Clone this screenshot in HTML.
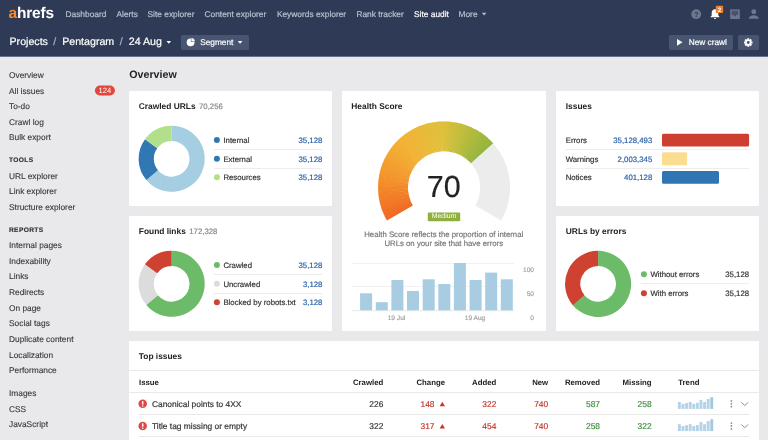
<!DOCTYPE html>
<html><head><meta charset="utf-8"><title>Site audit</title>
<style>
*{box-sizing:border-box;margin:0;padding:0}
body{will-change:transform;-webkit-text-stroke:.18px currentColor}html,body{text-rendering:geometricPrecision;width:768px;height:440px;overflow:hidden;background:#e9e9eb;font-family:"Liberation Sans",Arial,sans-serif;font-size:8.3px;color:#333}
.abs{position:absolute}
#hdr{position:absolute;left:0;top:0;width:768px;height:57px;background:linear-gradient(#2f3b56 56px,#66708a 56px)}
.nav{position:absolute;top:8.700px;font-size:8.370px;color:#b9c0cf;white-space:nowrap;line-height:10px}
.nav.on{color:#fff}
.logo{-webkit-text-stroke:0;position:absolute;left:8.5px;top:3.5px;font-size:15.5px;font-weight:bold;color:#fff;letter-spacing:-0.2px;line-height:20px}
.logo em{font-style:normal;color:#f6892a}
.bc{position:absolute;top:35px;left:9.500px;font-size:10.650px;color:#fff;white-space:nowrap;line-height:14px}
.bc.sl{color:#aab2c3}
.btn{position:absolute;top:34.6px;height:15px;background:#485571;border-radius:1.5px;color:#fff;font-size:8.3px;line-height:15px;white-space:nowrap}
.si{-webkit-text-stroke:.12px currentColor;position:absolute;left:9px;font-size:8.350px;line-height:12px;color:#393939;white-space:nowrap}
.sh{-webkit-text-stroke:.12px currentColor;position:absolute;left:9px;font-size:6.600px;font-weight:bold;letter-spacing:.36px;line-height:12px;color:#2c2c2c}
.badge{-webkit-text-stroke:0;position:absolute;left:95px;top:85.600px;width:19.900px;height:9.900px;color:#fff;font-size:7.600px;line-height:10.300px;text-align:center}
.card{position:absolute;background:#fff;border-radius:1px}
.ct{-webkit-text-stroke:0;position:absolute;left:9.800px;top:9.300px;font-size:8.400px;font-weight:bold;color:#222;line-height:12px;white-space:nowrap}
.ct span{-webkit-text-stroke:.18px currentColor;font-weight:normal;color:#888;font-size:7.800px;margin-left:1.100px}
h1{-webkit-text-stroke:0;position:absolute;left:129.200px;top:68.300px;font-size:10.700px;line-height:15px;font-weight:bold;color:#222}
.lr{position:absolute;height:12px;line-height:12px;white-space:nowrap;font-size:7.800px}
.dv{position:absolute;height:1px;background:#ededed}
.lr i{position:absolute;left:0px;top:3px;width:6px;height:6px;border-radius:3px}
.lr span{position:absolute;left:9.400px;top:.6px}
.lr b{position:absolute;right:0;top:.6px;font-weight:normal;color:#2c62a8}
.lr b.k{color:#333}
.ir{position:absolute;left:565.700px;width:183.400px;height:12px;line-height:12px;font-size:7.800px;white-space:nowrap}
.ir b{position:absolute;right:96.800px;font-weight:normal;color:#2c62a8}
.ir u{position:absolute;left:96.300px;top:-1.450px;height:12.700px;border-radius:1.500px}
.desc{position:absolute;left:341.500px;width:204.500px;top:229.500px;text-align:center;color:#777;font-size:7.800px;line-height:9.900px}
.th{-webkit-text-stroke:0;position:absolute;top:376.800px;font-weight:bold;font-size:7.800px;line-height:12px;color:#222;white-space:nowrap}
.td{position:absolute;font-size:8.400px;line-height:12px;white-space:nowrap}
.r{text-align:right}
.red{color:#c8372b}.grn{color:#3f8f3f}
.hl{position:absolute;left:129px;width:630px;height:1px;background:#e9e9e9}
</style></head><body>
<div id="hdr">
<div class="logo"><em>a</em>hrefs</div>
<div class="nav" style="left:65.5px">Dashboard</div>
<div class="nav" style="left:116.5px">Alerts</div>
<div class="nav" style="left:147.5px">Site explorer</div>
<div class="nav" style="left:204.5px">Content explorer</div>
<div class="nav" style="left:276.900px">Keywords explorer</div>
<div class="nav" style="left:356.400px">Rank tracker</div>
<div class="nav on" style="left:414px">Site audit</div>
<div class="nav" style="left:458.5px">More</div>
<div class="bc">Projects</div><div class="bc" style="left:62.2px">Pentagram</div><div class="bc" style="left:128.8px">24 Aug</div><div class="bc sl" style="left:53.2px">/</div><div class="bc sl" style="left:119.800px">/</div>
<div class="btn" style="left:181px;width:68px"><span style="position:absolute;left:19.2px">Segment</span></div>
<div class="btn" style="left:669.2px;width:64.1px"><span style="position:absolute;left:19.5px">New crawl</span></div>
<div class="btn" style="left:738.3px;width:20.5px"><svg width="20.5" height="15" viewBox="0 0 20.5 15" style="position:absolute;left:0;top:0"><g transform="translate(10.25 7.5)" fill="#fff"><g id="tt"><rect x="-1" y="-4.300" width="2" height="8.600" rx=".3"/><rect x="-4.300" y="-1" width="8.600" height="2" rx=".3"/></g><use href="#tt" transform="rotate(45)"/><circle r="3.100"/><circle r="1.450" fill="#485571"/></g></svg></div>
<svg class="abs" style="left:0;top:0" width="768" height="57" viewBox="0 0 768 57">
<circle cx="696.2" cy="14.2" r="4.9" fill="#6d778d"/>
<text x="696.2" y="17" font-size="7.5" font-weight="bold" fill="#2f3b56" text-anchor="middle" font-family="Liberation Sans">?</text>
<path d="M715 9.2c-2 0-3.3 1.5-3.3 3.6v2.6l-1.1 1.3v.6h8.8v-.6l-1.100-1.300v-2.600c0-2.100-1.300-3.600-3.300-3.600zM713.900 18h2.200a1.100 1.100 0 0 1-2.200 0z" fill="#fff"/>
<rect x="715.800" y="5.800" width="7.300" height="7.200" rx=".8" fill="#ec8230"/>
<text x="719.45" y="11.7" font-size="6.3" font-weight="bold" fill="#fff" text-anchor="middle" font-family="Liberation Sans">2</text>
<rect x="730.300" y="9.500" width="9.400" height="9.400" fill="#48526b"/><path d="M730.300 9.500h9.400v9.400h-9.400zM731.600 10.800v4.300h1.800l.7 1.100h1.600l.7-1.100h1.800v-4.300z" fill="#6d778d" fill-rule="evenodd"/>
<circle cx="753.800" cy="11.800" r="2.450" fill="#6d778d"/><path d="M748.900 18.800c0-2.300 2-3.500 4.900-3.500s4.900 1.200 4.900 3.500z" fill="#6d778d"/>
<path d="M166.500 40.900h4.600l-2.300 2.800z" fill="#fff"/><path d="M481.900 12.800h4.400l-2.200 2.700z" fill="#b9c0cf"/>
<circle cx="190.600" cy="42.300" r="3.900" fill="#fff"/><path d="M190.900 42V37.500a4.500 4.500 0 0 1 4.500 4.500z" fill="#485571"/><path d="M191.400 41.500V38.100a3.500 3.500 0 0 1 3.400 3.400z" fill="#fff"/>
<path d="M237.800 41h4.600l-2.300 2.700z" fill="#fff"/>
<path d="M677 38.900l5.500 3.400-5.500 3.400z" fill="#fff"/>
</svg>
</div>
<div class="si" style="top:69px">Overview</div><div class="si" style="top:84.6px">All issues</div><div class="si" style="top:99.7px">To-do</div><div class="si" style="top:115.6px">Crawl log</div><div class="si" style="top:130.8px">Bulk export</div><div class="si" style="top:169.5px">URL explorer</div><div class="si" style="top:185px">Link explorer</div><div class="si" style="top:200.8px">Structure explorer</div><div class="si" style="top:239px">Internal pages</div><div class="si" style="top:254.8px">Indexability</div><div class="si" style="top:270.3px">Links</div><div class="si" style="top:286px">Redirects</div><div class="si" style="top:301.5px">On page</div><div class="si" style="top:317.2px">Social tags</div><div class="si" style="top:332.8px">Duplicate content</div><div class="si" style="top:348.5px">Localization</div><div class="si" style="top:364px">Performance</div><div class="si" style="top:387px">Images</div><div class="si" style="top:402.5px">CSS</div><div class="si" style="top:418px">JavaScript</div><div class="sh" style="top:155.300px">TOOLS</div><div class="sh" style="top:224.800px">REPORTS</div>
<h1>Overview</h1>

<div class="card" style="left:129px;top:91px;width:203px;height:115px"><div class="ct">Crawled URLs <span>70,256</span></div></div>
<div class="card" style="left:129px;top:216px;width:203px;height:115px"><div class="ct">Found links <span>172,328</span></div></div>
<div class="card" style="left:342px;top:91px;width:204px;height:240px"><div class="ct" style="left:9.300px">Health Score</div></div>
<div class="card" style="left:556px;top:91px;width:203px;height:115px"><div class="ct">Issues</div></div>
<div class="card" style="left:556px;top:216px;width:203px;height:115px"><div class="ct">URLs by errors</div></div>
<div class="card" style="left:129px;top:341px;width:630px;height:110px"><div class="ct" style="top:8.7px">Top issues</div></div>

<svg class="abs" style="left:0;top:0" width="768" height="440" viewBox="0 0 768 440">
<rect x="94.950" y="85.600" width="19.950" height="9.900" rx="4.950" fill="#e0483e"/><path d="M171.65 125.75A33.05 33.05 0 1 1 146.15 179.82L157.88 170.15A17.85 17.85 0 1 0 171.65 140.95Z" fill="#a6cee3"/><path d="M146.33 180.04A33.05 33.05 0 0 1 145.08 139.14L157.30 148.18A17.85 17.85 0 0 0 157.98 170.27Z" fill="#2f78b4"/><path d="M144.91 139.37A33.05 33.05 0 0 1 171.65 125.75L171.65 140.95A17.85 17.85 0 0 0 157.21 148.31Z" fill="#b2df8a"/><path d="M171.65 250.75A33.05 33.05 0 1 1 146.15 304.82L157.88 295.15A17.85 17.85 0 1 0 171.65 265.95Z" fill="#6cbb69"/><path d="M146.33 305.04A33.05 33.05 0 0 1 145.08 264.14L157.30 273.18A17.85 17.85 0 0 0 157.98 295.27Z" fill="#dcdcdc"/><path d="M144.91 264.37A33.05 33.05 0 0 1 171.65 250.75L171.65 265.95A17.85 17.85 0 0 0 157.21 273.31Z" fill="#cf4131"/><path d="M598.10 250.85A33.05 33.05 0 1 1 572.60 304.92L584.33 295.25A17.85 17.85 0 1 0 598.10 266.05Z" fill="#6cbb69"/><path d="M572.78 305.14A33.05 33.05 0 0 1 598.10 250.85L598.10 266.05A17.85 17.85 0 0 0 584.43 295.37Z" fill="#cf4131"/><path d="M493.15 143.24A66 66 0 0 1 501.26 220.40L475.36 205.45A36.1 36.1 0 0 0 470.93 163.24Z" fill="#ececec"/><path d="M386.94 220.40A66 66 0 0 1 385.58 217.91L412.09 204.09A36.1 36.1 0 0 0 412.84 205.45Z" fill="#f16921"/><path d="M385.90 218.52A66 66 0 0 1 384.61 215.99L411.56 203.04A36.1 36.1 0 0 0 412.27 204.42Z" fill="#f16b22"/><path d="M384.91 216.61A66 66 0 0 1 383.71 214.03L411.07 201.97A36.1 36.1 0 0 0 411.73 203.38Z" fill="#f16d22"/><path d="M383.99 214.66A66 66 0 0 1 382.88 212.05L410.61 200.88A36.1 36.1 0 0 0 411.22 202.31Z" fill="#f16f23"/><path d="M383.14 212.69A66 66 0 0 1 382.11 210.05L410.19 199.79A36.1 36.1 0 0 0 410.76 201.23Z" fill="#f17123"/><path d="M382.35 210.69A66 66 0 0 1 381.40 208.01L409.81 198.68A36.1 36.1 0 0 0 410.32 200.14Z" fill="#f17324"/><path d="M381.62 208.67A66 66 0 0 1 380.76 205.96L409.46 197.55A36.1 36.1 0 0 0 409.93 199.03Z" fill="#f27524"/><path d="M380.96 206.62A66 66 0 0 1 380.19 203.89L409.14 196.42A36.1 36.1 0 0 0 409.57 197.91Z" fill="#f27725"/><path d="M380.37 204.56A66 66 0 0 1 379.69 201.80L408.87 195.27A36.1 36.1 0 0 0 409.24 196.78Z" fill="#f27926"/><path d="M379.84 202.47A66 66 0 0 1 379.25 199.69L408.63 194.12A36.1 36.1 0 0 0 408.95 195.64Z" fill="#f27b26"/><path d="M379.39 200.37A66 66 0 0 1 378.89 197.57L408.43 192.96A36.1 36.1 0 0 0 408.70 194.49Z" fill="#f27d27"/><path d="M379.00 198.26A66 66 0 0 1 378.59 195.44L408.27 191.80A36.1 36.1 0 0 0 408.49 193.34Z" fill="#f28027"/><path d="M378.68 196.13A66 66 0 0 1 378.36 193.31L408.14 190.63A36.1 36.1 0 0 0 408.32 192.17Z" fill="#f28228"/><path d="M378.43 193.99A66 66 0 0 1 378.21 191.16L408.06 189.46A36.1 36.1 0 0 0 408.18 191.01Z" fill="#f28428"/><path d="M378.25 191.85A66 66 0 0 1 378.12 189.01L408.01 188.28A36.1 36.1 0 0 0 408.08 189.83Z" fill="#f28629"/><path d="M378.14 189.70A66 66 0 0 1 378.10 186.86L408.00 187.11A36.1 36.1 0 0 0 408.02 188.66Z" fill="#f28829"/><path d="M378.10 187.55A66 66 0 0 1 378.15 184.71L408.03 185.93A36.1 36.1 0 0 0 408.00 187.48Z" fill="#f28a2a"/><path d="M378.13 185.40A66 66 0 0 1 378.28 182.57L408.10 184.76A36.1 36.1 0 0 0 408.02 186.31Z" fill="#f38c2a"/><path d="M378.23 183.26A66 66 0 0 1 378.47 180.42L408.20 183.58A36.1 36.1 0 0 0 408.07 185.13Z" fill="#f38e2b"/><path d="M378.40 181.11A66 66 0 0 1 378.73 178.29L408.35 182.42A36.1 36.1 0 0 0 408.16 183.96Z" fill="#f3902b"/><path d="M378.64 178.98A66 66 0 0 1 379.06 176.17L408.53 181.26A36.1 36.1 0 0 0 408.30 182.79Z" fill="#f3922c"/><path d="M378.95 176.85A66 66 0 0 1 379.46 174.05L408.75 180.10A36.1 36.1 0 0 0 408.46 181.63Z" fill="#f3942c"/><path d="M379.33 174.73A66 66 0 0 1 379.93 171.96L409.00 178.95A36.1 36.1 0 0 0 408.67 180.47Z" fill="#f3962d"/><path d="M379.77 172.63A66 66 0 0 1 380.47 169.87L409.30 177.81A36.1 36.1 0 0 0 408.92 179.32Z" fill="#f3982d"/><path d="M380.29 170.54A66 66 0 0 1 381.07 167.81L409.63 176.68A36.1 36.1 0 0 0 409.20 178.18Z" fill="#f3992e"/><path d="M380.87 168.47A66 66 0 0 1 381.75 165.77L409.99 175.57A36.1 36.1 0 0 0 409.52 177.05Z" fill="#f39b2e"/><path d="M381.52 166.42A66 66 0 0 1 382.48 163.75L410.40 174.46A36.1 36.1 0 0 0 409.87 175.93Z" fill="#f39c2f"/><path d="M382.24 164.39A66 66 0 0 1 383.29 161.75L410.84 173.37A36.1 36.1 0 0 0 410.26 174.82Z" fill="#f39e2f"/><path d="M383.02 162.39A66 66 0 0 1 384.15 159.79L411.31 172.30A36.1 36.1 0 0 0 410.69 173.72Z" fill="#f39f30"/><path d="M383.87 160.42A66 66 0 0 1 385.09 157.85L411.82 171.24A36.1 36.1 0 0 0 411.16 172.64Z" fill="#f3a130"/><path d="M384.78 158.47A66 66 0 0 1 386.08 155.94L412.36 170.19A36.1 36.1 0 0 0 411.65 171.57Z" fill="#f3a231"/><path d="M385.75 156.55A66 66 0 0 1 387.14 154.07L412.94 169.17A36.1 36.1 0 0 0 412.19 170.53Z" fill="#f3a431"/><path d="M386.79 154.67A66 66 0 0 1 388.25 152.23L413.55 168.16A36.1 36.1 0 0 0 412.75 169.50Z" fill="#f3a631"/><path d="M387.89 152.82A66 66 0 0 1 389.43 150.43L414.20 167.18A36.1 36.1 0 0 0 413.35 168.48Z" fill="#f3a732"/><path d="M389.04 151.00A66 66 0 0 1 390.66 148.67L414.87 166.21A36.1 36.1 0 0 0 413.99 167.49Z" fill="#f3a932"/><path d="M390.26 149.23A66 66 0 0 1 391.95 146.95L415.58 165.27A36.1 36.1 0 0 0 414.65 166.52Z" fill="#f3aa33"/><path d="M391.53 147.50A66 66 0 0 1 393.30 145.27L416.31 164.36A36.1 36.1 0 0 0 415.35 165.57Z" fill="#f3ac33"/><path d="M392.86 145.81A66 66 0 0 1 394.69 143.64L417.08 163.46A36.1 36.1 0 0 0 416.07 164.65Z" fill="#f3ad34"/><path d="M394.24 144.16A66 66 0 0 1 396.15 142.05L417.87 162.60A36.1 36.1 0 0 0 416.83 163.75Z" fill="#f3af34"/><path d="M395.67 142.56A66 66 0 0 1 397.65 140.51L418.69 161.75A36.1 36.1 0 0 0 417.61 162.87Z" fill="#f3b035"/><path d="M397.16 141.00A66 66 0 0 1 399.20 139.03L419.54 160.94A36.1 36.1 0 0 0 418.43 162.02Z" fill="#f3b235"/><path d="M398.70 139.50A66 66 0 0 1 400.80 137.59L420.42 160.15A36.1 36.1 0 0 0 419.27 161.20Z" fill="#f2b335"/><path d="M400.28 138.05A66 66 0 0 1 402.45 136.21L421.32 159.40A36.1 36.1 0 0 0 420.13 160.40Z" fill="#f1b336"/><path d="M401.91 136.64A66 66 0 0 1 404.14 134.88L422.24 158.67A36.1 36.1 0 0 0 421.02 159.64Z" fill="#f0b436"/><path d="M403.59 135.30A66 66 0 0 1 405.87 133.60L423.19 157.97A36.1 36.1 0 0 0 421.94 158.90Z" fill="#f0b436"/><path d="M405.31 134.00A66 66 0 0 1 407.64 132.38L424.16 157.31A36.1 36.1 0 0 0 422.88 158.19Z" fill="#efb537"/><path d="M407.07 132.77A66 66 0 0 1 409.45 131.23L425.15 156.67A36.1 36.1 0 0 0 423.84 157.52Z" fill="#eeb637"/><path d="M408.87 131.59A66 66 0 0 1 411.30 130.13L426.16 156.07A36.1 36.1 0 0 0 424.83 156.87Z" fill="#edb637"/><path d="M410.70 130.47A66 66 0 0 1 413.18 129.09L427.19 155.51A36.1 36.1 0 0 0 425.83 156.26Z" fill="#ecb737"/><path d="M412.57 129.42A66 66 0 0 1 415.10 128.11L428.24 154.97A36.1 36.1 0 0 0 426.86 155.68Z" fill="#ebb838"/><path d="M414.48 128.42A66 66 0 0 1 417.05 127.20L429.30 154.47A36.1 36.1 0 0 0 427.90 155.14Z" fill="#ebb838"/><path d="M416.42 127.49A66 66 0 0 1 419.02 126.35L430.38 154.01A36.1 36.1 0 0 0 428.96 154.63Z" fill="#eab938"/><path d="M418.38 126.62A66 66 0 0 1 421.02 125.57L431.48 153.58A36.1 36.1 0 0 0 430.03 154.15Z" fill="#e9b939"/><path d="M420.38 125.81A66 66 0 0 1 423.05 124.85L432.59 153.19A36.1 36.1 0 0 0 431.12 153.71Z" fill="#e8ba39"/><path d="M422.39 125.07A66 66 0 0 1 425.10 124.19L433.71 152.83A36.1 36.1 0 0 0 432.23 153.31Z" fill="#e7bb39"/><path d="M424.44 124.40A66 66 0 0 1 427.17 123.61L434.84 152.51A36.1 36.1 0 0 0 433.34 152.94Z" fill="#e6bb3a"/><path d="M426.50 123.79A66 66 0 0 1 429.25 123.09L435.98 152.23A36.1 36.1 0 0 0 434.47 152.61Z" fill="#e5bc3a"/><path d="M428.58 123.25A66 66 0 0 1 431.36 122.64L437.13 151.98A36.1 36.1 0 0 0 435.61 152.31Z" fill="#e5bd3a"/><path d="M430.68 122.78A66 66 0 0 1 433.47 122.26L438.29 151.77A36.1 36.1 0 0 0 436.76 152.05Z" fill="#e4bd3b"/><path d="M432.79 122.38A66 66 0 0 1 435.60 121.95L439.45 151.60A36.1 36.1 0 0 0 437.91 151.83Z" fill="#e3be3b"/><path d="M434.91 122.04A66 66 0 0 1 437.74 121.71L440.62 151.47A36.1 36.1 0 0 0 439.08 151.65Z" fill="#e2be3b"/><path d="M437.05 121.78A66 66 0 0 1 439.88 121.54L441.79 151.37A36.1 36.1 0 0 0 440.24 151.51Z" fill="#e1bf3c"/><path d="M439.19 121.58A66 66 0 0 1 442.03 121.43L442.97 151.32A36.1 36.1 0 0 0 441.41 151.40Z" fill="#e0c03c"/><path d="M441.34 121.46A66 66 0 0 1 444.18 121.40L444.14 151.30A36.1 36.1 0 0 0 442.59 151.33Z" fill="#dfc03c"/><path d="M443.49 121.40A66 66 0 0 1 446.33 121.44L445.32 151.32A36.1 36.1 0 0 0 443.76 151.30Z" fill="#dcc03c"/><path d="M445.64 121.42A66 66 0 0 1 448.47 121.55L446.49 151.38A36.1 36.1 0 0 0 444.94 151.31Z" fill="#d9bf3c"/><path d="M447.78 121.50A66 66 0 0 1 450.62 121.72L447.66 151.48A36.1 36.1 0 0 0 446.12 151.36Z" fill="#d6bf3c"/><path d="M449.93 121.66A66 66 0 0 1 452.75 121.97L448.83 151.61A36.1 36.1 0 0 0 447.29 151.44Z" fill="#d3bf3c"/><path d="M452.07 121.88A66 66 0 0 1 454.88 122.29L450.00 151.78A36.1 36.1 0 0 0 448.46 151.56Z" fill="#d0be3c"/><path d="M454.20 122.18A66 66 0 0 1 456.99 122.67L451.15 152.00A36.1 36.1 0 0 0 449.62 151.72Z" fill="#cdbe3c"/><path d="M456.32 122.54A66 66 0 0 1 459.10 123.13L452.30 152.24A36.1 36.1 0 0 0 450.78 151.92Z" fill="#cabe3c"/><path d="M458.42 122.97A66 66 0 0 1 461.18 123.65L453.44 152.53A36.1 36.1 0 0 0 451.93 152.16Z" fill="#c7bd3c"/><path d="M460.51 123.47A66 66 0 0 1 463.25 124.24L454.57 152.85A36.1 36.1 0 0 0 453.08 152.43Z" fill="#c5bd3c"/><path d="M462.59 124.04A66 66 0 0 1 465.30 124.90L455.69 153.21A36.1 36.1 0 0 0 454.21 152.75Z" fill="#c2bd3c"/><path d="M464.64 124.68A66 66 0 0 1 467.32 125.62L456.80 153.61A36.1 36.1 0 0 0 455.34 153.09Z" fill="#bfbd3c"/><path d="M466.67 125.38A66 66 0 0 1 469.32 126.41L457.90 154.04A36.1 36.1 0 0 0 456.45 153.48Z" fill="#bcbc3c"/><path d="M468.68 126.15A66 66 0 0 1 471.29 127.26L458.97 154.51A36.1 36.1 0 0 0 457.55 153.90Z" fill="#b9bc3c"/><path d="M470.66 126.98A66 66 0 0 1 473.24 128.18L460.04 155.01A36.1 36.1 0 0 0 458.63 154.35Z" fill="#b6bb3c"/><path d="M472.62 127.88A66 66 0 0 1 475.15 129.16L461.08 155.55A36.1 36.1 0 0 0 459.70 154.84Z" fill="#b3bb3c"/><path d="M474.54 128.84A66 66 0 0 1 477.03 130.20L462.11 156.12A36.1 36.1 0 0 0 460.75 155.37Z" fill="#b0ba3c"/><path d="M476.43 129.86A66 66 0 0 1 478.88 131.31L463.12 156.72A36.1 36.1 0 0 0 461.79 155.93Z" fill="#adba3c"/><path d="M478.29 130.95A66 66 0 0 1 480.69 132.47L464.11 157.35A36.1 36.1 0 0 0 462.80 156.52Z" fill="#abb93c"/><path d="M480.11 132.09A66 66 0 0 1 482.46 133.69L465.08 158.02A36.1 36.1 0 0 0 463.80 157.15Z" fill="#a8b93c"/><path d="M481.89 133.29A66 66 0 0 1 484.19 134.97L466.03 158.72A36.1 36.1 0 0 0 464.77 157.80Z" fill="#a5b83c"/><path d="M483.64 134.55A66 66 0 0 1 485.87 136.30L466.95 159.45A36.1 36.1 0 0 0 465.72 158.49Z" fill="#a2b83c"/><path d="M485.34 135.87A66 66 0 0 1 487.52 137.69L467.85 160.21A36.1 36.1 0 0 0 466.65 159.21Z" fill="#9fb73c"/><path d="M486.99 137.24A66 66 0 0 1 489.11 139.13L468.72 161.00A36.1 36.1 0 0 0 467.56 159.96Z" fill="#9cb73c"/><path d="M488.60 138.66A66 66 0 0 1 490.66 140.62L469.57 161.81A36.1 36.1 0 0 0 468.44 160.74Z" fill="#99b63c"/><path d="M490.17 140.14A66 66 0 0 1 492.16 142.16L470.39 162.66A36.1 36.1 0 0 0 469.30 161.55Z" fill="#96b63c"/><path d="M491.68 141.66A66 66 0 0 1 493.15 143.24L470.93 163.24A36.1 36.1 0 0 0 470.13 162.38Z" fill="#93b53c"/><rect x="662" y="133.75" width="87.1" height="12.800" rx="1.500" fill="#cd3f31"/><rect x="662" y="152.35" width="25.1" height="12.800" rx="1.500" fill="#fbdd8f"/><rect x="662" y="170.95" width="57" height="12.800" rx="1.500" fill="#2f76b3"/><circle cx="216.90" cy="140.05" r="3" fill="#2f78b4"/><circle cx="216.90" cy="158.65" r="3" fill="#2f78b4"/><circle cx="216.90" cy="177.25" r="3" fill="#b2df8a"/><circle cx="216.90" cy="265.05" r="3" fill="#6cbb69"/><circle cx="216.90" cy="283.65" r="3" fill="#dcdcdc"/><circle cx="216.90" cy="302.25" r="3" fill="#cf4131"/><circle cx="643.90" cy="274.35" r="3" fill="#6cbb69"/><circle cx="643.90" cy="293.15" r="3" fill="#cf4131"/><rect x="427.800" y="212.400" width="32.400" height="8.800" rx="1" fill="#8fb03e"/>
<g stroke="#f0f0f0" stroke-width="1"><path d="M351.500 263.400H514M351.500 286.400H514"/><path d="M351.500 310.700H514" stroke="#e8e8e8"/></g>
<rect x="360.1" y="293.3" width="12" height="17.0" fill="#a8cde2"/><rect x="375.8" y="302.2" width="12" height="8.1" fill="#a8cde2"/><rect x="391.4" y="280" width="12" height="30.3" fill="#a8cde2"/><rect x="407.0" y="291" width="12" height="19.3" fill="#a8cde2"/><rect x="422.7" y="279.3" width="12" height="31.0" fill="#a8cde2"/><rect x="438.3" y="284" width="12" height="26.3" fill="#a8cde2"/><rect x="453.9" y="263" width="12" height="47.3" fill="#a8cde2"/><rect x="469.6" y="280" width="12" height="30.3" fill="#a8cde2"/><rect x="485.2" y="272.6" width="12" height="37.7" fill="#a8cde2"/><rect x="500.8" y="279.3" width="12" height="31.0" fill="#a8cde2"/><rect x="677.9" y="402.0" width="2.9" height="6.9" fill="#b5d3e6"/><rect x="681.5" y="403.8" width="2.9" height="5.1" fill="#b5d3e6"/><rect x="685.1" y="403.0" width="2.9" height="5.9" fill="#b5d3e6"/><rect x="688.7" y="402.0" width="2.9" height="6.9" fill="#b5d3e6"/><rect x="692.3" y="403.8" width="2.9" height="5.1" fill="#b5d3e6"/><rect x="695.9" y="402.8" width="2.9" height="6.1" fill="#b5d3e6"/><rect x="699.5" y="399.9" width="2.9" height="9.0" fill="#b5d3e6"/><rect x="703.1" y="402.0" width="2.9" height="6.9" fill="#b5d3e6"/><rect x="706.7" y="398.9" width="2.9" height="10.0" fill="#b5d3e6"/><rect x="710.3" y="397.1" width="2.9" height="11.8" fill="#a3c8df"/><rect x="677.9" y="424.2" width="2.9" height="6.9" fill="#b5d3e6"/><rect x="681.5" y="426.0" width="2.9" height="5.1" fill="#b5d3e6"/><rect x="685.1" y="425.2" width="2.9" height="5.9" fill="#b5d3e6"/><rect x="688.7" y="424.2" width="2.9" height="6.9" fill="#b5d3e6"/><rect x="692.3" y="426.0" width="2.9" height="5.1" fill="#b5d3e6"/><rect x="695.9" y="425.0" width="2.9" height="6.1" fill="#b5d3e6"/><rect x="699.5" y="422.1" width="2.9" height="9.0" fill="#b5d3e6"/><rect x="703.1" y="424.2" width="2.9" height="6.9" fill="#b5d3e6"/><rect x="706.7" y="421.1" width="2.9" height="10.0" fill="#b5d3e6"/><rect x="710.3" y="419.3" width="2.9" height="11.8" fill="#a3c8df"/>
<g fill="#df4945"><circle cx="142.700" cy="403.850" r="4.250"/><circle cx="142.700" cy="426.050" r="4.250"/></g>
<g fill="#fff"><rect x="141.950" y="401.100" width="1.500" height="3.500" rx=".6"/><rect x="141.950" y="405.300" width="1.500" height="1.500" rx=".7"/><rect x="141.950" y="423.300" width="1.500" height="3.500" rx=".6"/><rect x="141.950" y="427.500" width="1.500" height="1.500" rx=".7"/></g>
<g fill="#c8372b"><path d="M439.600 406.300l2.700-4.600 2.700 4.600zM439.600 428.600l2.700-4.600 2.700 4.600z"/></g>
<g fill="#8c8c8c"><circle cx="731.400" cy="400.900" r=".9"/><circle cx="731.400" cy="403.800" r=".9"/><circle cx="731.400" cy="406.700" r=".9"/><circle cx="731.400" cy="423.100" r=".9"/><circle cx="731.400" cy="426" r=".9"/><circle cx="731.400" cy="428.900" r=".9"/></g>
<g fill="none" stroke="#8c8c8c" stroke-width=".95"><path d="M741.300 402.300l3.500 3.200 3.500-3.200M741.300 424.500l3.500 3.200 3.500-3.200"/></g>
</svg>

<div class="badge">124</div>
<div class="lr" style="left:214px;width:108.4px;top:134.5px"><span>Internal</span><b class="v">35,128</b></div><div class="lr" style="left:214px;width:108.4px;top:153.1px"><span>External</span><b class="v">35,128</b></div><div class="lr" style="left:214px;width:108.4px;top:171.7px"><span>Resources</span><b class="v">35,128</b></div><div class="dv" style="left:214px;width:108.4px;top:149.0px"></div><div class="dv" style="left:214px;width:108.4px;top:167.6px"></div><div class="lr" style="left:214px;width:108.4px;top:259.5px"><span>Crawled</span><b class="v">35,128</b></div><div class="lr" style="left:214px;width:108.4px;top:278.1px"><span>Uncrawled</span><b class="v">3,128</b></div><div class="lr" style="left:214px;width:108.4px;top:296.7px"><span>Blocked by robots.txt</span><b class="v">3,128</b></div><div class="dv" style="left:214px;width:108.4px;top:274.0px"></div><div class="dv" style="left:214px;width:108.4px;top:292.6px"></div><div class="lr" style="left:641px;width:108.1px;top:268.8px"><span>Without errors</span><b class="k">35,128</b></div><div class="lr" style="left:641px;width:108.1px;top:287.6px"><span>With errors</span><b class="k">35,128</b></div><div class="dv" style="left:641px;width:108.1px;top:283.4px"></div>
<div class="ir" style="top:135.15px">Errors<b>35,128,493</b></div><div class="ir" style="top:153.75px">Warnings<b>2,003,345</b></div><div class="ir" style="top:172.35px">Notices<b>401,128</b></div><div class="dv" style="left:565.700px;width:183.400px;top:149px"></div><div class="dv" style="left:565.700px;width:183.400px;top:167.600px"></div>


<div class="abs" style="left:413.800px;width:60px;top:170px;text-align:center;font-size:30.500px;line-height:34px;color:#222">70</div>
<div class="abs" style="left:427.800px;top:212.300px;width:32.400px;height:9px;color:#fff;font-size:6.900px;line-height:9.500px;text-align:center;-webkit-text-stroke:0">Medium</div>
<div class="desc">Health Score reflects the proportion of internal<br>URLs on your site that have errors</div>
<div class="abs r" style="left:514px;width:20px;top:266px;font-size:6.600px;line-height:10px;color:#a2a2a2">100</div>
<div class="abs r" style="left:514px;width:20px;top:290px;font-size:6.600px;line-height:10px;color:#a2a2a2">50</div>
<div class="abs r" style="left:514px;width:20px;top:314px;font-size:6.600px;line-height:10px;color:#a2a2a2">0</div>
<div class="abs" style="left:376.500px;width:40px;top:314.100px;text-align:center;font-size:6.600px;line-height:10px;color:#a2a2a2">19 Jul</div>
<div class="abs" style="left:455px;width:40px;top:314.100px;text-align:center;font-size:6.600px;line-height:10px;color:#a2a2a2">19 Aug</div>

<div class="hl" style="top:369.700px"></div><div class="hl" style="top:391.900px"></div><div class="hl" style="top:413.900px;left:138.600px;width:610.800px"></div><div class="hl" style="top:436.100px;left:138.600px;width:610.800px"></div>
<div class="th" style="left:139px">Issue</div>
<div class="th r" style="left:333.300px;width:50px">Crawled</div>
<div class="th r" style="left:395px;width:50px">Change</div>
<div class="th r" style="left:446.300px;width:50px">Added</div>
<div class="th r" style="left:498.200px;width:50px">New</div>
<div class="th r" style="left:550px;width:50px">Removed</div>
<div class="th r" style="left:601.600px;width:50px">Missing</div>
<div class="th" style="left:678.200px">Trend</div>
<div class="td" style="left:152px;top:397.5px">Canonical points to 4XX</div>
<div class="td r" style="left:333.300px;width:50px;top:397.5px">226</div>
<div class="td r red" style="left:384.500px;width:50px;top:397.5px">148</div>
<div class="td r red" style="left:446.300px;width:50px;top:397.5px">322</div>
<div class="td r red" style="left:498.200px;width:50px;top:397.5px">740</div>
<div class="td r grn" style="left:550px;width:50px;top:397.5px">587</div>
<div class="td r grn" style="left:601.600px;width:50px;top:397.5px">258</div>
<div class="td" style="left:152px;top:419.8px">Title tag missing or empty</div>
<div class="td r" style="left:333.300px;width:50px;top:419.8px">322</div>
<div class="td r red" style="left:384.500px;width:50px;top:419.8px">317</div>
<div class="td r red" style="left:446.300px;width:50px;top:419.8px">454</div>
<div class="td r red" style="left:498.200px;width:50px;top:419.8px">740</div>
<div class="td r grn" style="left:550px;width:50px;top:419.8px">258</div>
<div class="td r grn" style="left:601.600px;width:50px;top:419.8px">322</div>
</body></html>
